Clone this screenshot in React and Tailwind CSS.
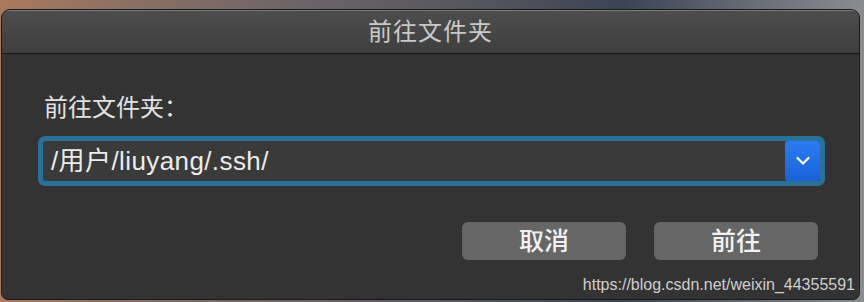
export default function App() {
  const font = { fontFamily: '"Liberation Sans", "Noto Sans CJK SC", sans-serif' };
  return (
    <div
      className="w-[864px] h-[302px] overflow-hidden pt-[9px] pl-[1px] bg-[linear-gradient(90deg,#a97a5c_0%,#8a7062_15%,#6b6468_35%,#55565c_55%,#3a4454_72%,#6a7078_88%,#8a8c90_100%)]"
      style={font}
    >
      <div className="w-[859px] h-[291px] rounded-t-[9px] rounded-b-[7px] border border-[#1a1a1a] bg-[#333333] overflow-hidden flex flex-col">
        <div className="h-[44px] shrink-0 flex items-center justify-center bg-[linear-gradient(180deg,#4d4d4d,#3f3f3f)] border-t border-[#7a7a7a] border-b border-b-[#141414]">
          <span className="text-[24px] leading-none text-[#c9c9c9] tracking-[1px] -mt-[1px]">前往文件夹</span>
        </div>
        <div className="flex-1 flex flex-col border-l border-r border-[#3c3c3c]">
          <div className="pl-[41px] pt-[39px] text-[24px] leading-[30px] text-[#e2e2e2]">前往文件夹：</div>
          <div className="ml-[35px] mt-[13px] w-[787px] h-[50px] rounded-[7px] bg-[#2a7099] p-[5px]">
            <div className="h-full flex rounded-[3px] bg-[#3a3a3a] overflow-hidden">
              <div className="flex-1 flex items-center pl-[8px] text-[26px] tracking-[0.4px] text-[#ececec] leading-none">
                /用户/liuyang/.ssh/
              </div>
              <div className="w-[35px] h-full bg-[linear-gradient(180deg,#2a7cf0,#1a62d6)] rounded-[3px] flex items-center justify-center">
                <svg width="16" height="10" viewBox="0 0 16 10" fill="none">
                  <path d="M2.5 2 L8 7.5 L13.5 2" stroke="#ffffff" strokeWidth="2.2" strokeLinecap="round" strokeLinejoin="round" />
                </svg>
              </div>
            </div>
          </div>
          <div className="flex justify-end gap-[28px] pr-[40px] mt-[36px]">
            <button className="w-[164px] h-[38px] rounded-[6px] bg-[#666666] text-[25px] leading-none text-[#f2f2f2] font-medium">取消</button>
            <button className="w-[164px] h-[38px] rounded-[6px] bg-[#666666] text-[25px] leading-none text-[#f2f2f2] font-medium">前往</button>
          </div>
          <div className="flex justify-end pr-[3px] mt-[17px]">
            <span className="text-[16px] leading-none text-[#cfcfcf]" style={{ fontFamily: '"Liberation Sans", Arial, sans-serif' }}>
              https://blog.csdn.net/weixin_44355591
            </span>
          </div>
        </div>
      </div>
    </div>
  );
}
